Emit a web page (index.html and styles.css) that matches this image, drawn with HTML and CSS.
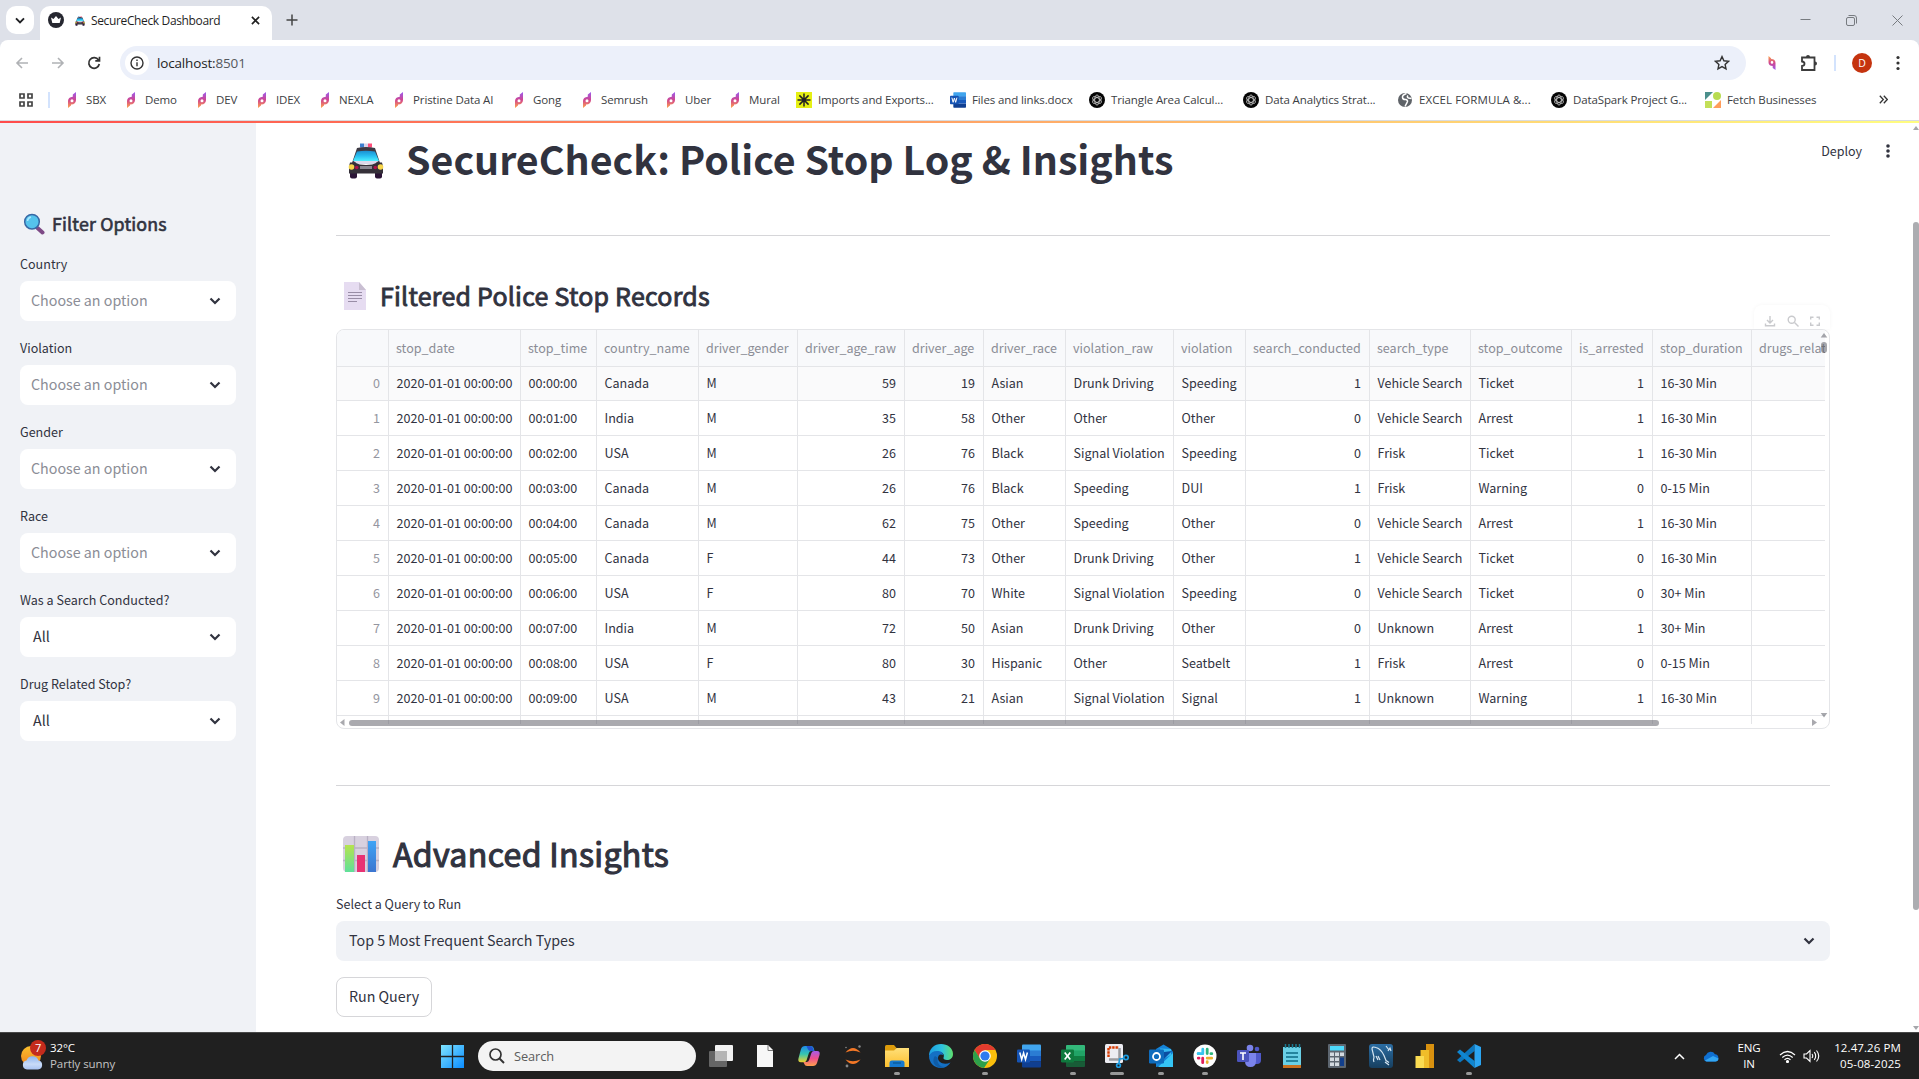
FILE: index.html
```html
<!DOCTYPE html>
<html lang="en">
<head>
<meta charset="utf-8">
<title>SecureCheck Dashboard</title>
<link rel="stylesheet" href="styles.css">
</head>
<body>
<svg class="defs" width="0" height="0" aria-hidden="true">
  <defs>
    <linearGradient id="gp" x1="0" y1="0" x2="0" y2="1"><stop offset="0" stop-color="#9b5cf0"/><stop offset=".5" stop-color="#d0458f"/><stop offset="1" stop-color="#ffa54a"/></linearGradient>
    <linearGradient id="gglass" x1="0" y1="0" x2="0" y2="1"><stop offset="0" stop-color="#1c8fd0"/><stop offset=".5" stop-color="#28bdf0"/><stop offset="1" stop-color="#4ff0ff"/></linearGradient>
    <linearGradient id="gwin" x1="0" y1="0" x2="1" y2="1"><stop offset="0" stop-color="#7fe4ff"/><stop offset="1" stop-color="#0a8cff"/></linearGradient>
    <linearGradient id="gfold" x1="0" y1="0" x2="0" y2="1"><stop offset="0" stop-color="#ffe07a"/><stop offset="1" stop-color="#fdbf2d"/></linearGradient>
    <linearGradient id="gedge" x1="0" y1="0" x2="1" y2="0"><stop offset="0" stop-color="#1b9de2"/><stop offset=".55" stop-color="#2fc3df"/><stop offset="1" stop-color="#5fe06c"/></linearGradient>
    <linearGradient id="gcopa" x1="0" y1="0" x2="0" y2="1"><stop offset="0" stop-color="#1f8bea"/><stop offset=".5" stop-color="#35c5b0"/><stop offset="1" stop-color="#f2d12c"/></linearGradient>
    <linearGradient id="gcopb" x1="0" y1="0" x2="0" y2="1"><stop offset="0" stop-color="#a45bea"/><stop offset=".5" stop-color="#ee4f8d"/><stop offset="1" stop-color="#ffa04b"/></linearGradient>
    <linearGradient id="ggreen" x1="0" y1="0" x2="0" y2="1"><stop offset="0" stop-color="#b5e34e"/><stop offset="1" stop-color="#5fe09a"/></linearGradient>
    <linearGradient id="gblue" x1="0" y1="0" x2="0" y2="1"><stop offset="0" stop-color="#3fa4f5"/><stop offset="1" stop-color="#3b75d0"/></linearGradient>
    <linearGradient id="gsun" x1="0" y1="0" x2="0" y2="1"><stop offset="0" stop-color="#fbc02d"/><stop offset="1" stop-color="#f0831e"/></linearGradient>
    <linearGradient id="gcloud" x1="0" y1="0" x2="0" y2="1"><stop offset="0" stop-color="#8db4ef"/><stop offset=".6" stop-color="#c9dbf8"/><stop offset="1" stop-color="#a9c3f2"/></linearGradient>
    <linearGradient id="gms" x1="0" y1="0" x2="0" y2="1"><stop offset="0" stop-color="#2b6da3"/><stop offset="1" stop-color="#173f5f"/></linearGradient>
    <symbol id="pico" viewBox="0 0 16 16"><path d="M12 0 8.800 2.400v2.300C5.600 4.800 4 6.600 4 9v7l3-2.600v-.9c3.200.1 5-1.700 5-4.500zM8 7.200a1.500 1.500 0 1 1 0 3 1.500 1.500 0 0 1 0-3z" fill="url(#gp)" fill-rule="evenodd"/></symbol>
    <symbol id="gpt" viewBox="0 0 16 16"><circle cx="8" cy="8" r="8" fill="#050505"/><g fill="none" stroke="#cfcfcf" stroke-width=".8"><ellipse cx="8" cy="8" rx="2.300" ry="5"/><ellipse cx="8" cy="8" rx="2.300" ry="5" transform="rotate(60 8 8)"/><ellipse cx="8" cy="8" rx="2.300" ry="5" transform="rotate(120 8 8)"/></g></symbol>
    <symbol id="docw" viewBox="0 0 24 24"><path d="M6 .5h17a1 1 0 0 1 1 1V7H5V1.500a1 1 0 0 1 1-1z" fill="#41a5ee"/><path d="M5 6.500h19V12H5z" fill="#2b7cd3"/><path d="M5 12h19v5.500H5z" fill="#185abd"/><path d="M5 17.500h19v5a1 1 0 0 1-1 1H6a1 1 0 0 1-1-1z" fill="#103f91"/><rect y="5.500" width="13" height="13" rx="1.200" fill="#1553b4"/><path d="m2.800 8.500 1.900 7 1.900-6.500 1.900 6.500 1.900-7" fill="none" stroke="#fff" stroke-width="1.500"/></symbol>
    <symbol id="car" viewBox="0 0 36 36"><path d="M12 .5h4v4h-4z" fill="#3d7fd0"/><path d="M16 .5h4v4h-4z" fill="#d8d4e8"/><path d="M20 .5h4v4h-4z" fill="#ff4d7a"/><rect x="2" y="27" width="7" height="8.500" rx="2" fill="#2b1436"/><rect x="27" y="27" width="7" height="8.500" rx="2" fill="#2b1436"/><path d="M9 5q9-2 18 0l5 15H4z" fill="#3d3a44"/><path d="M9 8.500q9-1.500 18 0L31 18H5z" fill="url(#gglass)"/><path d="M5.500 18h25l-4 3h-17z" fill="#ddd8ea"/><path d="M2 19.500h5q4 2.500 11 2.500t11-2.500h5l1 4v7H1v-7z" fill="#353039"/><circle cx="3.500" cy="24" r="2.800" fill="#f7d54a"/><circle cx="32.500" cy="24" r="2.800" fill="#f7d54a"/><circle cx="8.700" cy="24.500" r="1.800" fill="#b01248"/><circle cx="27.300" cy="24.500" r="1.800" fill="#b01248"/><path d="M12 23h12v3H12z" fill="#8b8791"/></symbol>
    <symbol id="chev" viewBox="0 0 12 8"><path d="M1.500 1.500 6 6l4.500-4.500" fill="none" stroke="#31333f" stroke-width="2.200"/></symbol>
  </defs>
</svg>

<div class="screen">
  <header class="tabstrip">
    <button class="tab-search"><svg width="10" height="7" viewBox="0 0 10 7"><path d="m1 1.300 4 4 4-4" fill="none" stroke="#1f2023" stroke-width="1.900"/></svg></button>
    <div class="tab">
      <svg width="16" height="16" viewBox="0 0 16 16"><circle cx="8" cy="8" r="8" fill="#262730"/><path d="M3 5.500 5.500 7 8 4l2.500 3L13 5.500 11.700 11H4.300z" fill="#fff"/></svg>
      <svg class="tab-car" width="10" height="10"><use href="#car"/></svg>
      <span class="tab-title">SecureCheck Dashboard</span>
      <svg class="tab-close" width="9" height="9" viewBox="0 0 10 10"><path d="m1 1 8 8M9 1 1 9" stroke="#222" stroke-width="1.800"/></svg>
    </div>
    <svg class="newtab" width="12" height="12" viewBox="0 0 12 12"><path d="M6 .5v11M.5 6h11" stroke="#444" stroke-width="1.500"/></svg>
    <div class="winctl">
      <svg width="11" height="11" viewBox="0 0 11 11"><path d="M.5 4.500h10" stroke="#777b80"/></svg>
      <svg width="11" height="11" viewBox="0 0 11 11" fill="none" stroke="#777b80"><rect x=".5" y="2.500" width="8" height="8" rx="1.500"/><path d="M2.500.5H8A2.500 2.500 0 0 1 10.500 3v5.500"/></svg>
      <svg width="11" height="11" viewBox="0 0 11 11"><path d="m.5.5 10 10m0-10-10 10" stroke="#777b80"/></svg>
    </div>
  </header>

  <div class="toolbar-back"><div class="toolbar">
    <div class="nav">
      <svg width="14" height="12" viewBox="0 0 14 12" fill="none" stroke="#b0b2b5" stroke-width="1.600"><path d="M13 6H2m5-5L2 6l5 5"/></svg>
      <svg width="14" height="12" viewBox="0 0 14 12" fill="none" stroke="#b0b2b5" stroke-width="1.600"><path d="M1 6h11M7 1l5 5-5 5"/></svg>
      <svg width="14" height="14" viewBox="0 0 14 14"><path d="M11.500 4A5.300 5.300 0 1 0 12.300 8M12.500.8v4H8.300" fill="none" stroke="#333" stroke-width="1.700"/></svg>
    </div>
    <div class="omnibox">
      <span class="info"><svg width="14" height="14" viewBox="0 0 14 14"><circle cx="7" cy="7" r="6" fill="none" stroke="#333" stroke-width="1.400"/><path d="M7 6.200V10.300M7 3.600v1.500" stroke="#333" stroke-width="1.400"/></svg></span>
      <span class="url">localhost:<i>8501</i></span>
      <svg class="star" width="16" height="16" viewBox="0 0 16 16"><path d="m8 1.600 1.900 4.200 4.600.5-3.400 3.100.9 4.500L8 11.600l-4 2.300.9-4.500L1.500 6.300l4.600-.5z" fill="none" stroke="#333" stroke-width="1.400"/></svg>
    </div>
    <div class="exts">
      <svg class="ext-p" width="14" height="14" viewBox="0 0 16 16"><g transform="matrix(1 0 0 -1 0 16)"><use href="#pico" width="16" height="16"/></g></svg>
      <svg class="puzzle" width="18" height="18" viewBox="0 0 18 18"><path d="M2 3.500h12.500V16H2v-4q2.500-.300 2.500-2.300T2 7.500z" fill="none" stroke="#3c3c3c" stroke-width="1.800"/><path d="M6 3a2 2 0 0 1 4 0zM15 7.500a2 2 0 0 1 0 4z" fill="#3c3c3c"/></svg>
      <span class="vsep"></span>
      <span class="avatar">D</span>
      <svg class="kebab" width="4" height="16" viewBox="0 0 4 16" fill="#333"><circle cx="2" cy="2.500" r="1.600"/><circle cx="2" cy="8" r="1.600"/><circle cx="2" cy="13.500" r="1.600"/></svg>
    </div>
  </div></div>

  <nav class="bookmarks">
    <svg class="apps" width="14" height="14" viewBox="0 0 14 14" fill="none" stroke="#444" stroke-width="1.700"><path d="M1 1h4v4H1zM9 1h4v4H9zM1 9h4v4H1zM9 9h4v4H9z"/></svg>
    <span class="vsep"></span>
    <a><svg><use href="#pico"/></svg>SBX</a>
    <a><svg><use href="#pico"/></svg>Demo</a>
    <a><svg><use href="#pico"/></svg>DEV</a>
    <a><svg><use href="#pico"/></svg>IDEX</a>
    <a><svg><use href="#pico"/></svg>NEXLA</a>
    <a><svg><use href="#pico"/></svg>Pristine Data AI</a>
    <a><svg><use href="#pico"/></svg>Gong</a>
    <a><svg><use href="#pico"/></svg>Semrush</a>
    <a><svg><use href="#pico"/></svg>Uber</a>
    <a><svg><use href="#pico"/></svg>Mural</a>
    <a><svg viewBox="0 0 16 16"><path d="M0 0h16v16H0z" fill="#e6f014"/><path d="M8 1.500v13M1.500 8h13M3.400 3.400l9.200 9.200M12.600 3.400l-9.200 9.200" stroke="#222" stroke-width="1.500"/></svg>Imports and Exports...</a>
    <a><svg><use href="#docw"/></svg>Files and links.docx</a>
    <a><svg><use href="#gpt"/></svg>Triangle Area Calcul...</a>
    <a><svg><use href="#gpt"/></svg>Data Analytics Strat...</a>
    <a class="caps"><svg viewBox="0 0 16 16"><circle cx="8" cy="8" r="7" fill="#5f6368"/><path d="M9.500 1.500Q5 3 5.500 5.500T9 7.500q2.500 1 1 3.200L8 14.500M11 3.500q-1.500 1.500.5 2.500l3 .5" fill="none" stroke="#fff" stroke-width="1.500"/></svg>EXCEL FORMULA &amp;...</a>
    <a><svg><use href="#gpt"/></svg>DataSpark Project G...</a>
    <a><svg viewBox="0 0 16 16"><path d="M0 0h8L0 8z" fill="#4b8f8c"/><circle cx="12" cy="4" r="4" fill="#b8dc50"/><path d="M0 9h7v7H0z" fill="#c3df58"/><path d="M16 8v8H8z" fill="#ff9d5c"/></svg>Fetch Businesses</a>
    <svg class="more" width="9" height="9" viewBox="0 0 9 9"><path d="m.8.8 3.500 3.700L.8 8.200M4.800.8l3.500 3.700-3.500 3.700" fill="none" stroke="#333" stroke-width="1.300"/></svg>
  </nav>

  <div class="rainbow"></div>

  <div class="app">
    <aside class="sidebar">
      <h3><svg width="22" height="22" viewBox="0 0 22 22"><path d="m14.500 15 5 4.500" stroke="#7d4a86" stroke-width="4" stroke-linecap="round"/><circle cx="9" cy="8.700" r="7.300" fill="#55c3ec" stroke="#3868a5" stroke-width="1.500"/><path d="M4.500 8A4.500 4.500 0 0 1 8 4" fill="none" stroke="#a8e6ff" stroke-width="1.500"/></svg>Filter Options</h3>
      <label>Country</label><div class="select multi">Choose an option<svg><use href="#chev"/></svg></div>
      <label>Violation</label><div class="select multi">Choose an option<svg><use href="#chev"/></svg></div>
      <label>Gender</label><div class="select multi">Choose an option<svg><use href="#chev"/></svg></div>
      <label>Race</label><div class="select multi">Choose an option<svg><use href="#chev"/></svg></div>
      <label>Was a Search Conducted?</label><div class="select">All<svg><use href="#chev"/></svg></div>
      <label>Drug Related Stop?</label><div class="select">All<svg><use href="#chev"/></svg></div>
    </aside>

    <main class="main">
      <h1><svg width="36" height="36"><use href="#car"/></svg>SecureCheck: Police Stop Log &amp; Insights</h1>
      <hr class="rule rule-top">
      <h3><svg width="22" height="28" viewBox="0 0 22 28"><path d="M0 0h15l7 8v20H0z" fill="#e6dcf1"/><path d="M15 0v8h7z" fill="#c9bfd2"/><path d="M4 10.500h14M4 13.500h14M4 16.500h14M4 19.500h9" stroke="#998da6"/></svg>Filtered Police Stop Records</h3>
      <div class="frame-wrap">
        <div class="frame-tools">
          <svg width="12" height="12" viewBox="0 0 12 12" fill="none" stroke="#c9cacd" stroke-width="1.400"><path d="M6 1v6.500M3 5l3 3 3-3M1.500 8.500v2.300h9V8.500"/></svg>
          <svg width="12" height="12" viewBox="0 0 12 12" fill="none" stroke="#c9cacd" stroke-width="1.400"><circle cx="4.700" cy="4.700" r="3.500"/><path d="m7.500 7.500 4 4"/></svg>
          <svg width="12" height="12" viewBox="0 0 12 12" fill="none" stroke="#c9cacd" stroke-width="1.400"><path d="M1.700 4.500V2.200h2.800M7.500 2.200h2.800v2.300M10.300 7.500v2.800H7.500M4.500 10.300H1.700V7.500"/></svg>
        </div>
        <div class="frame">
          <div class="grid" id="grid"></div>
          <svg class="vbar" width="8" height="390" viewBox="0 0 8 390" fill="#55565f" fill-opacity=".52"><path d="m4 3 3.300 4.500H.7zM4 387.500.7 383h6.600z"/><rect x="1" y="12" width="6" height="11" rx="3"/></svg>
          <div class="hbar"><svg width="5" height="7" viewBox="0 0 5 7"><path d="M4.500 0v7L0 3.500z" fill="#a9a9ae"/></svg><span class="hthumb"></span><svg class="harrow-r" width="5" height="7" viewBox="0 0 5 7"><path d="M0 0v7l5-3.500z" fill="#a9a9ae"/></svg></div>
        </div>
      </div>
      <hr class="rule rule-mid">
      <h2><svg width="36" height="36" viewBox="0 0 36 36"><rect width="36" height="36" rx="4" fill="#d8d1df"/><path d="M11.500 0v36M24.500 0v36M0 12h36M0 24.500h36" stroke="#b9b1c4" stroke-width="1.300"/><path d="M2 9h9v27H2z" fill="url(#ggreen)"/><path d="M14 19h8v17h-8z" fill="#e83273"/><path d="M25 5h8v31h-8z" fill="url(#gblue)"/></svg>Advanced Insights</h2>
      <label>Select a Query to Run</label>
      <div class="select query">Top 5 Most Frequent Search Types<svg><use href="#chev"/></svg></div>
      <button class="run">Run Query</button>
    </main>

    <div class="app-actions"><span>Deploy</span><svg width="4" height="14" viewBox="0 0 4 14" fill="#31333f"><circle cx="2" cy="2" r="1.800"/><circle cx="2" cy="7" r="1.800"/><circle cx="2" cy="12" r="1.800"/></svg></div>
    <div class="pagebar"><i class="up"></i><b></b><i class="down"></i></div>
  </div>

  <footer class="taskbar">
    <div class="weather">
      <svg width="26" height="34" viewBox="0 0 26 34"><circle cx="11" cy="17" r="10" fill="url(#gsun)"/><path d="M7 30.500a4.500 4.500 0 0 1-.500-8.900 6.300 6.300 0 0 1 12 0 4.500 4.500 0 0 1-.500 8.900z" fill="url(#gcloud)"/><circle cx="18" cy="9" r="8" fill="#c42b1c"/></svg>
      <b class="badge">7</b>
      <div><span>32°C</span><span class="dim">Partly sunny</span></div>
    </div>
    <div class="start"><svg width="23" height="23" viewBox="0 0 23 23" fill="url(#gwin)"><path d="M0 0h23v23H0z"/><path d="M11.500 0v23M0 11.500h23" stroke="#202020" stroke-width="1.300"/></svg></div>
    <div class="search"><svg width="16" height="16" viewBox="0 0 16 16"><circle cx="6.500" cy="6.500" r="5.500" fill="none" stroke="#333" stroke-width="1.700"/><path d="m10.500 10.500 4.500 4.500" stroke="#333" stroke-width="2"/></svg>Search</div>
    <div class="pins">
      <span><svg viewBox="0 0 24 24"><rect x="6" y="1" width="18" height="16" rx="1" fill="#f2f2f2"/><rect y="7" width="18" height="16" rx="1" fill="#777" fill-opacity=".8"/><path d="M6 7h12v10H6z" fill="#b5b5b5"/></svg></span>
      <span><svg viewBox="0 0 24 24"><path d="M4 1h11l5 5v17H4z" fill="#f7f7f7"/><path d="M15 1v5.500h5" fill="none" stroke="#777"/></svg></span>
      <span><svg viewBox="0 0 24 24"><path d="M8 2h6q2 0 2.700 2l.8 3h-3q-2 0-2.700 2.200l-2.200 7q-.6 2-2.700 2H4q-3.500 0-2.500-4L4 5q1-3 4-3z" fill="url(#gcopa)"/><path d="M13 2q2.500 0 3.200 2.500L17 7h-3q-2 0-3-1.500L9.500 2z" fill="#2253ce"/><path d="M16 22h-6q-2 0-2.700-2l-.8-2h3q2 0 2.700-2.200l2.200-6.800q.6-2 2.700-2H20q3.500 0 2.500 4L20 19q-1 3-4 3z" fill="url(#gcopb)"/></svg></span>
      <span><svg viewBox="0 0 24 24"><path d="M4.500 8.500q7.500-9 15 0-7.500-3.500-15 0zM4.500 15.500q7.500 9 15 0-7.500 3.500-15 0z" fill="#f37726"/><circle cx="18.500" cy="2.500" r="1.200" fill="#888"/><circle cx="6" cy="22" r="1.400" fill="#888"/><circle cx="5" cy="3.500" r=".8" fill="#888"/></svg></span>
      <span class="on"><svg viewBox="0 0 24 24"><path d="M0 2.500Q0 1 1.500 1H9l2.500 3-2 3H0z" fill="#dd9c0b"/><path d="M0 6.500h9L11.500 4H24v19H0z" fill="url(#gfold)"/><path d="M4.500 23v-4q0-2.500 2.500-2.500h10q2.500 0 2.500 2.500v4z" fill="#1679cf"/><path d="M8 19h8" stroke="#0c5896" stroke-width="1.300"/></svg></span>
      <span><svg viewBox="0 0 24 24"><path d="M0 12C0 4.500 5.500 0 12 0s12 4 12 10c0 4-3 6-6 6-2.500 0-4-1-3.500-2.200C16 10 13 8 10 8c-5 0-8.500 3-10 4z" fill="url(#gedge)"/><path d="M0 12c1.500-3.500 5-5.500 9.500-5 3 .3 4.500 2 4.500 4-3-1.500-5 .5-5 3 0 4.500 6 7.500 12.500 4.500C19.500 22 16 24 12 24 5 24 0 18.500 0 12z" fill="#1470c4"/><path d="M9 14c-2 4 2 9.500 7 9-9 3-14.500-5-10-11z" fill="#0c4f93" fill-opacity=".6"/></svg></span>
      <span class="on"><svg viewBox="0 0 24 24"><circle cx="12" cy="12" r="12" fill="#fbbf0c"/><path d="M1.600 6A12 12 0 0 1 22.400 6H12L7 15z" fill="#e33b2e"/><path d="M1.600 6A12 12 0 0 0 11 24l6-9-10-.500z" fill="#2da04b"/><circle cx="12" cy="12" r="5.800" fill="#fff"/><circle cx="12" cy="12" r="4.600" fill="#2e7bef"/></svg></span>
      <span><svg><use href="#docw"/></svg></span>
      <span class="on"><svg viewBox="0 0 24 24"><path d="M6 1h17a1 1 0 0 1 1 1v5H5V2a1 1 0 0 1 1-1z" fill="#33b87a"/><path d="M5 6.500h19V12H5z" fill="#21a366"/><path d="M5 12h19v5.500H5z" fill="#107c41"/><path d="M5 17.500h19V22a1 1 0 0 1-1 1H6a1 1 0 0 1-1-1z" fill="#185c37"/><rect y="5.500" width="13" height="13" rx="1.200" fill="#0f7a3e"/><path d="m3.700 8.500 5.600 7m0-7-5.600 7" stroke="#fff" stroke-width="1.700"/></svg></span>
      <span class="on wide"><svg viewBox="0 0 24 24"><rect width="18" height="19" rx="1.500" fill="#ececf2"/><path d="M3.500 13V3.500H14" fill="none" stroke="#d83b01" stroke-width="2.400" stroke-dasharray="2.400 .9"/><path d="M14.500 4v11.500H4" fill="none" stroke="#9b9ba0" stroke-width="2.500"/><circle cx="21" cy="13.500" r="2.200" fill="none" stroke="#1e9be0" stroke-width="1.700"/><circle cx="13.500" cy="21.500" r="1.900" fill="none" stroke="#1e9be0" stroke-width="1.700"/><path d="m14 19 .5-4 4.500-.500" fill="none" stroke="#1e9be0" stroke-width="1.600"/></svg></span>
      <span class="on"><svg viewBox="0 0 24 24"><path d="m7 5 7.500-4.500L22 5l2 3v12l-17 3z" fill="#1483d8"/><path d="M11 4.500 22 5v6l-8 4z" fill="#35b8f1"/><path d="m15 8 8-1-9 9z" fill="#0b4ea2"/><path d="M24 9v14H9z" fill="#35c5f5"/><rect y="5.500" width="15" height="14" rx="1.200" fill="#0f6cbd"/><circle cx="7.500" cy="12.500" r="3.500" fill="none" stroke="#fff" stroke-width="1.800"/></svg></span>
      <span class="on"><svg viewBox="0 0 24 24"><circle cx="12" cy="12" r="11.500" fill="#fff"/><g stroke-width="2.800" stroke-linecap="round"><path d="M9.800 5.200v4.300M5.200 9.700h1" stroke="#36c5f0"/><path d="M5.200 9.700h4.300" stroke="#36c5f0"/><path d="M14.200 5.200v4.300M18.800 9.700h-.9" stroke="#2eb67d"/><path d="M14.200 14.200h4.500M14.200 18.500v-.8" stroke="#ecb22e"/><path d="M9.700 14.200v4.500M5.300 14.200h.7" stroke="#e01e5a"/></g></svg></span>
      <span><svg viewBox="0 0 24 24"><circle cx="13" cy="4" r="3.300" fill="#7b83eb"/><circle cx="20" cy="5" r="2.300" fill="#5059c9"/><path d="M16 9h8v7q0 4-4 4h-4z" fill="#5059c9"/><path d="M8 9h11v8q0 6-5.500 6T8 17z" fill="#7b83eb"/><rect y="6" width="12" height="12" rx="1.200" fill="#4b53bc"/><path d="M3 9h6M6 9v7" stroke="#fff" stroke-width="1.600"/></svg></span>
      <span><svg viewBox="0 0 24 24"><path d="M2 3h18v20H2z" fill="#6ad0e6"/><path d="M2 21h18v3H2z" fill="#c8701f"/><path d="M5 9h12M5 13h12M5 17h12" stroke="#0e6c86" stroke-width="1.700"/><path d="M4.500 0v4M8 0v4M11.500 0v4M15 0v4M18.500 0v4" stroke="#19788f" stroke-width="1.500"/></svg></span>
      <span><svg viewBox="0 0 24 24"><rect x="3" width="18" height="24" rx="1" fill="#5d6670"/><path d="M5 2h14v4.500H5z" fill="#4dd9fb"/><path d="M5 8.500h4v3.500H5zM10 8.500h4v3.500h-4zM15 8.500h4v3.500h-4zM5 13.500h4V17H5zM10 13.500h4V17h-4zM5 18.500h4V22H5zM10 18.500h4V22h-4z" fill="#d3dae0"/><path d="M15 13.500h4V22h-4z" fill="#123f8c"/></svg></span>
      <span><svg viewBox="0 0 24 24"><rect width="24" height="24" rx="3" fill="url(#gms)"/><path d="M5 18q-1-2 0-5L3 5q0-3 4-1.500 5 1.500 8 8l2 5 3 2M9 16l-2-4M9 12l2 4m5 2 4 3M17 2l3 4M19 7l2-3 1 3" fill="none" stroke="#d5e5f1" stroke-width="1.200"/></svg></span>
      <span><svg viewBox="0 0 24 24"><path d="M13 0h8v24h-8z" fill="#d9910f"/><path d="M7.500 6H16v18H7.500z" fill="#f0bd2a"/><path d="M2.500 12H11v12H2.500z" fill="#fbdc52"/></svg></span>
      <span class="on"><svg viewBox="0 0 24 24"><path d="M17.500 0v7L3 18.500l-3-2.500z" fill="#0c76bd"/><path d="M17.500 24v-7L3 5.500 0 8z" fill="#0f86d1"/><path d="M17.500 0 24 3v18l-6.500 3z" fill="#2ba5f2"/></svg></span>
    </div>
    <div class="tray">
      <svg class="t-up" width="11" height="7" viewBox="0 0 11 7"><path d="m1 6 4.500-4.500L10 6" fill="none" stroke="#fff" stroke-width="1.500"/></svg>
      <svg class="t-cloud" width="16" height="11" viewBox="0 0 16 11"><path d="M3.500 10.500A3.400 3.400 0 0 1 3 4 5 5 0 0 1 12 3.200a3.700 3.700 0 0 1 .5 7.300z" fill="#0f6fd0"/><path d="m2 9.500 8-4.500 5.500 2.500q-.3 3-3 3h-9z" fill="#33a6f2"/></svg>
      <div class="lang"><span>ENG</span><span>IN</span></div>
      <svg class="t-wifi" width="17" height="13" viewBox="0 0 17 13" fill="none" stroke="#fff" stroke-width="1.200"><path d="M1 5q7.500-7 15 0M3.300 7.500q5.200-4.800 10.400 0M5.500 9.800q3-2.800 6 0"/><circle cx="8.500" cy="11.500" r="1" fill="#fff"/></svg>
      <svg class="t-vol" width="17" height="14" viewBox="0 0 17 14" fill="none" stroke="#fff" stroke-width="1.100"><path d="M1 5h2.500L7 1.500v11L3.500 9H1zM9 5q1.500 2 0 4M11.300 3.200q2.800 3.800 0 7.600M13.500 1.500q4.500 5.500 0 11"/></svg>
      <div class="clock"><span>12.47.26 PM</span><span>05-08-2025</span></div>
    </div>
  </footer>
</div>
<script src="table.js"></script>
</body>
</html>
```

FILE: table.js
```js
const columns = ['', 'stop_date', 'stop_time', 'country_name', 'driver_gender', 'driver_age_raw', 'driver_age', 'driver_race', 'violation_raw', 'violation', 'search_conducted', 'search_type', 'stop_outcome', 'is_arrested', 'stop_duration', 'drugs_related_stop'];
const numeric = new Set([0, 5, 6, 10, 13]);
const rows = [
  'Canada|M|59|19|Asian|Drunk Driving|Speeding|1|Vehicle Search|Ticket|1|16-30 Min',
  'India|M|35|58|Other|Other|Other|0|Vehicle Search|Arrest|1|16-30 Min',
  'USA|M|26|76|Black|Signal Violation|Speeding|0|Frisk|Ticket|1|16-30 Min',
  'Canada|M|26|76|Black|Speeding|DUI|1|Frisk|Warning|0|0-15 Min',
  'Canada|M|62|75|Other|Speeding|Other|0|Vehicle Search|Arrest|1|16-30 Min',
  'Canada|F|44|73|Other|Drunk Driving|Other|1|Vehicle Search|Ticket|0|16-30 Min',
  'USA|F|80|70|White|Signal Violation|Speeding|0|Vehicle Search|Ticket|0|30+ Min',
  'India|M|72|50|Asian|Drunk Driving|Other|0|Unknown|Arrest|1|30+ Min',
  'USA|F|80|30|Hispanic|Other|Seatbelt|1|Frisk|Arrest|0|0-15 Min',
  'USA|M|43|21|Asian|Signal Violation|Signal|1|Unknown|Warning|1|16-30 Min'
].map((line, i) => [i, '2020-01-01 00:00:00', `00:0${i}:00`, ...line.split('|'), '']);

function addRow(cells, kind) {
  const row = document.createElement('div');
  row.className = 'row ' + kind;
  cells.forEach((text, i) => {
    const cell = document.createElement('div');
    cell.className = 'cell' + (numeric.has(i) && kind !== 'head' ? ' num' : '');
    cell.textContent = text;
    row.append(cell);
  });
  document.getElementById('grid').append(row);
}

addRow(columns, 'head');
rows.forEach((r, i) => addRow(r, i === 0 ? 'hover' : 'body'));
addRow(columns.map(() => ''), 'partial');
```

FILE: styles.css
```css
* { box-sizing: border-box; }
body { margin: 0; overflow: hidden; font-family: "Open Sans", "Noto Sans", sans-serif; background: #fff; }
svg { display: block; flex: none; }
.defs { position: absolute; }
.screen { width: 1919px; height: 1079px; display: flex; flex-direction: column; }

/* browser chrome */
.tabstrip { height: 40px; background: #dee1e9; display: flex; align-items: center; padding-left: 6px; flex: none; }
.tab-search { width: 28px; height: 28px; border: 0; border-radius: 10px; background: #fff; display: grid; place-items: center; padding: 0; }
.tab { align-self: flex-end; width: 232px; height: 34px; margin-left: 6px; padding: 0 12px 6px 8px; background: #fff; border-radius: 10px 10px 0 0; display: flex; align-items: center; }
.tab-car { margin: 2px 6px 0 11px; }
.tab-title { font-size: 12px; letter-spacing: -.36px; color: #1f1f1f; white-space: nowrap; }
.tab-close { margin-left: auto; }
.newtab { margin-left: 14px; }
.winctl { margin-left: auto; margin-right: 16px; display: flex; gap: 35px; }
.toolbar-back { background: #dee1e9; flex: none; }
.toolbar { height: 43px; display: flex; align-items: center; padding-top: 3px; background: #fff; border-radius: 8px 8px 0 0; }
.nav { width: 120px; padding-left: 15px; display: flex; align-items: center; gap: 22px; }
.omnibox { width: 1626px; height: 34px; border-radius: 17px; background: #ecf0fa; display: flex; align-items: center; padding: 0 16px 0 5px; }
.info { width: 24px; height: 24px; border-radius: 50%; background: #fff; display: grid; place-items: center; }
.url { margin-left: 8px; font-size: 13.500px; letter-spacing: -.16px; color: #1f1f1f; }
.url i { font-style: normal; color: #55585d; }
.star { margin-left: auto; }
.exts { flex: 1; display: flex; align-items: center; padding-left: 19px; }
.puzzle { margin-left: 21px; }
.vsep { width: 2px; height: 16px; background: #d3e3fd; }
.exts .vsep { margin-left: 16px; }
.avatar { width: 20px; height: 20px; border-radius: 50%; background: #c5340f; color: #fff; font-size: 10.500px; line-height: 20px; text-align: center; margin-left: 16px; }
.kebab { margin-left: 24px; }
.bookmarks { height: 37px; flex: none; display: grid; grid-template-columns: 29px 16px 59px 71px 60px 63px 74px 120px 68px 84px 64px 69px 154px 139px 154px 154px 154px 154px 174px 10px; align-items: center; padding-left: 19px; padding-bottom: 4px; font-size: 11.500px; letter-spacing: -.12px; color: #3c4043; }
.bookmarks a { display: flex; align-items: center; white-space: nowrap; line-height: 16px; }
.bookmarks a svg { width: 16px; height: 16px; margin-right: 6px; }
.bookmarks .caps { letter-spacing: .1px; }
.rainbow { height: 3px; flex: none; border-top: 1px solid #d9dce0; background: linear-gradient(90deg, #ff4b4b, #fffd80); background-clip: padding-box; }

/* streamlit page */
.app { height: 909px; flex: none; display: grid; grid-template-columns: 256px 1fr; position: relative; font-family: "Noto Sans CJK JP", "Noto Sans", sans-serif; color: #31333f; }
.sidebar { background: #f0f2f6; padding: 88px 20px 0; }
.sidebar h3, .main h1, .main h2, .main h3 { margin: 0; display: flex; align-items: center; white-space: nowrap; }
.sidebar h3, .main h2, .main h3 { font-weight: 400; -webkit-text-stroke: .035em #31333f; letter-spacing: .01em; }
.sidebar h3 { height: 24px; font-size: 17.800px; padding-left: 3px; margin-bottom: 19px; }
.sidebar h3 svg { margin: 1px 7px 0 0; }
.app label { display: block; height: 20px; font-size: 12.550px; line-height: 19px; margin-bottom: 7px; }
.select { height: 40px; border-radius: 8px; background: #fff; display: flex; align-items: center; padding: 0 15px 4px 13px; font-size: 14.270px; margin-bottom: 17px; }
.sidebar .select { margin-bottom: 17px; }
.select.multi { padding-left: 11px; color: #8b8d96; }
.select svg { width: 12px; height: 8px; margin-left: auto; margin-top: 4px; }
.main { padding: 9px 89px 0 80px; }
.main h1 { height: 54px; font-size: 39.330px; font-weight: 700; padding: 0 0 4px 12px; }
.main h1 svg { margin: 7px 22px 0 0; }
.rule { border: 0; border-top: 1px solid #d6d6d9; margin: 0; }
.rule-top { margin-top: 49px; }
.main h3 { margin-top: 42px; height: 34px; font-size: 24.950px; padding-left: 8px; }
.main h3 svg { margin: 1px 14px 0 0; }
.frame-wrap { position: relative; margin-top: 17px; }
.frame-tools { position: absolute; right: 0; bottom: 100%; width: 76px; height: 24px; border-radius: 8px 8px 0 0; background: #fff; box-shadow: 0 0 4px rgba(0,0,0,.04); display: flex; gap: 10.500px; align-items: center; padding: 8px 0 0 10px; }
.frame { position: relative; height: 400px; border: 1px solid #e4e5e8; border-radius: 8px; overflow: hidden; background: #fff; }
.grid { width: 1488px; height: 394px; overflow: hidden; font-size: 12.560px; }
.row { display: grid; grid-template-columns: 52px 132px 76px 102px 99px 107px 79px 82px 108px 72px 124px 101px 101px 81px 99px 140px; height: 35px; }
.row.head { height: 36px; background: #f8f9fb; color: #8b8d96; }
.row.hover { background: #fafafb; }
.cell { border-right: 1px solid #e4e5e8; border-bottom: 1px solid #e4e5e8; padding: 0 8px 0 7.500px; line-height: 34px; white-space: nowrap; }
.head .cell { line-height: 36px; padding: 0 0 0 7px; }
.num { text-align: right; }
.cell:first-child { color: #9496a0; padding-right: 8px; }
.vbar { position: absolute; right: 1px; top: 0; }
.hbar { position: absolute; left: 3px; right: 0; bottom: 2px; height: 7px; display: flex; align-items: center; }
.hthumb { width: 1310px; height: 6px; border-radius: 3px; background: rgba(85,86,95,.5); margin-left: 4px; }
.harrow-r { margin-left: 153px; }
.rule-mid { margin-top: 56px; }
.main h2 { margin-top: 43px; height: 48px; font-size: 32.100px; padding-left: 7px; }
.main h2 svg { margin: 1px 14px 0 0; }
.main label { margin-top: 18px; margin-bottom: 7px; line-height: 18px; height: 19px; }
.main .select.query { background: #f0f2f6; margin: 0 0 16px; }
.run { font: inherit; font-size: 14.270px; color: inherit; width: 96px; height: 40px; border: 1px solid #d6d6d9; border-radius: 8px; background: #fff; padding: 0 0 3px; display: block; white-space: nowrap; }
.app-actions { position: absolute; right: 29px; top: 18px; height: 20px; display: flex; align-items: center; gap: 24px; font-size: 12.500px; }
.app-actions span { padding-bottom: 2px; }
.pagebar { position: absolute; right: 0; top: 3px; bottom: 2px; width: 7px; display: flex; flex-direction: column; align-items: center; }
.pagebar b { width: 6px; height: 688px; margin-top: 92px; border-radius: 3px; background: #acadb1; }
.up, .down { border: 3px solid transparent; }
.up { border-top: 0; border-bottom: 4px solid #a5a6aa; }
.down { border-bottom: 0; border-top: 4px solid #a5a6aa; margin-top: auto; }

/* taskbar */
.taskbar { height: 47px; flex: none; background: #202020; border-top: 1px solid #484848; display: flex; align-items: center; color: #fff; font-size: 11.500px; letter-spacing: -.08px; }
.taskbar div > span { display: block; line-height: 16px; white-space: nowrap; }
.weather { width: 430px; padding-left: 20px; display: flex; align-items: center; gap: 4px; position: relative; }
.weather .dim { color: #c3c3c3; }
.badge { position: absolute; left: 34px; top: 0; width: 8px; text-align: center; font-weight: 400; font-size: 11px; line-height: 17px; }
.start { width: 44px; display: grid; place-items: center; }
.search { width: 218px; height: 30px; margin: 0 3px 0 4px; border-radius: 15px; background: #f3f3f3; color: #5c5c5c; display: flex; align-items: center; gap: 9px; padding-left: 11px; font-size: 12.800px; }
.pins { display: grid; grid-template-columns: repeat(18, 44px); height: 46px; }
.taskbar .pins > span { display: grid; place-items: center; position: relative; }
.pins svg { width: 24px; height: 24px; }
.pins .on::after { content: ""; position: absolute; bottom: 4px; left: 19px; width: 6px; height: 3px; border-radius: 2px; background: #989898; }
.pins .wide::after { left: 15px; width: 14px; }
.tray { margin-left: auto; padding-right: 18px; display: flex; align-items: center; }
.t-cloud { margin-left: 18px; }
.lang { width: 30px; margin-left: 15px; text-align: center; }
.t-wifi { margin-left: 15px; }
.t-vol { margin-left: 7px; }
.clock { width: 68px; margin-left: 13px; text-align: right; letter-spacing: .1px; }
```
